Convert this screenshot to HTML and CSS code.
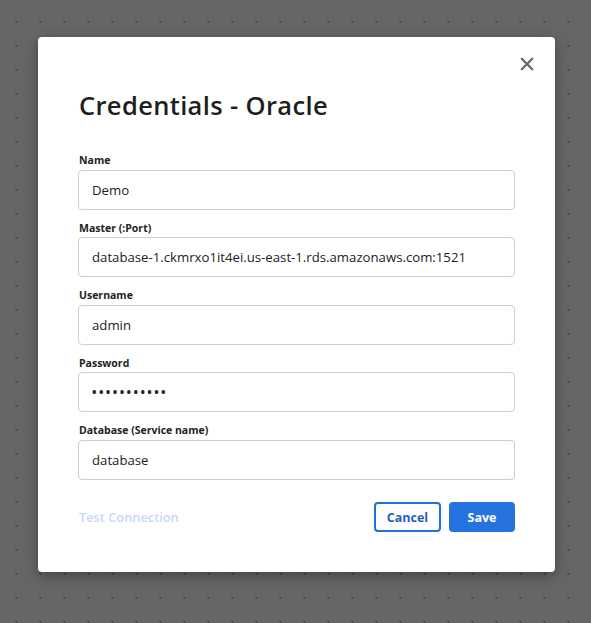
FILE: index.html
```html
<!DOCTYPE html>
<html>
<head>
<meta charset="utf-8">
<link rel="stylesheet" href="styles.css">
</head>
<body>
<div class="modal">
  <button class="close" aria-label="Close">
    <svg width="14" height="14" viewBox="0 0 14 14"><path d="M1.8 1.8 L12.2 12.2 M12.2 1.8 L1.8 12.2" stroke="#666" stroke-width="2.3" stroke-linecap="round"/></svg>
  </button>
  <h1 class="title">Credentials - Oracle</h1>
  <div class="fields">
    <div class="field">
      <label class="label">Name</label>
      <div class="input">Demo</div>
    </div>
    <div class="field">
      <label class="label">Master (:Port)</label>
      <div class="input">database-1.ckmrxo1it4ei.us-east-1.rds.amazonaws.com:1521</div>
    </div>
    <div class="field">
      <label class="label">Username</label>
      <div class="input">admin</div>
    </div>
    <div class="field">
      <label class="label">Password</label>
      <div class="input password">•••••••••••</div>
    </div>
    <div class="field">
      <label class="label">Database (Service name)</label>
      <div class="input">database</div>
    </div>
  </div>
  <div class="footer">
    <span class="test">Test Connection</span>
    <div class="actions">
      <button class="btn btn-outline">Cancel</button>
      <button class="btn btn-primary">Save</button>
    </div>
  </div>
</div>
</body>
</html>
```
FILE: styles.css
```css
html, body {
  margin: 0;
  padding: 0;
}
body {
  width: 591px;
  height: 623px;
  overflow: hidden;
  background-color: #666666;
  background-image: radial-gradient(circle, #454545 0.9px, transparent 1.4px);
  background-size: 24px 24px;
  background-position: 4.5px 10px;
  font-family: "Open Sans", sans-serif;
  padding-top: 37px;
  box-sizing: border-box;
}
.modal {
  position: relative;
  margin-left: 38px;
  width: 517px;
  height: 535px;
  box-sizing: border-box;
  background: #fff;
  border-radius: 4px;
  box-shadow: 0 4px 14px rgba(0,0,0,0.35);
  padding: 53px 40px 0 40px;
}
.close {
  position: absolute;
  top: 20px;
  right: 21px;
  width: 14px;
  height: 14px;
  padding: 0;
  border: 0;
  background: none;
  display: flex;
}
.title {
  margin: 0 0 0 1px;
  font-family: "Open Sans", sans-serif;
  font-weight: 600;
  font-size: 25.5px;
  line-height: 30px;
  color: #1e1e1e;
  letter-spacing: 0.35px;
}
.fields {
  margin-top: 34px;
  display: flex;
  flex-direction: column;
  gap: 12px;
}
.field {
  display: flex;
  flex-direction: column;
  gap: 2.5px;
}
.label {
  font-family: "Open Sans", sans-serif;
  font-weight: 700;
  font-size: 10.5px;
  line-height: 13px;
  color: #222;
  padding-left: 1px;
}
.input {
  height: 40px;
  box-sizing: border-box;
  border: 1px solid #cfcfcf;
  border-radius: 4px;
  padding: 0 13px;
  display: flex;
  align-items: center;
  font-family: "Open Sans", sans-serif;
  font-size: 13.2px;
  color: #222;
}
.input.password {
  font-size: 12px;
  letter-spacing: 2.4px;
  font-weight: 700;
}
.footer {
  margin-top: 22.5px;
  display: flex;
  align-items: center;
  justify-content: space-between;
}
.test {
  font-family: "Open Sans", sans-serif;
  font-weight: 600;
  font-size: 12.8px;
  color: #c6d9f5;
  padding-left: 1px;
}
.actions {
  display: flex;
  gap: 8px;
}
.btn {
  height: 30px;
  box-sizing: border-box;
  border-radius: 4px;
  font-family: "Open Sans", sans-serif;
  font-weight: 700;
  font-size: 12.5px;
  padding: 0;
  cursor: pointer;
}
.btn-outline {
  width: 67px;
  background: #fff;
  border: 2px solid #1f6fdc;
  color: #1f5fbf;
}
.btn-primary {
  width: 66px;
  background: #2673e0;
  border: 0;
  color: #fff;
}
```
